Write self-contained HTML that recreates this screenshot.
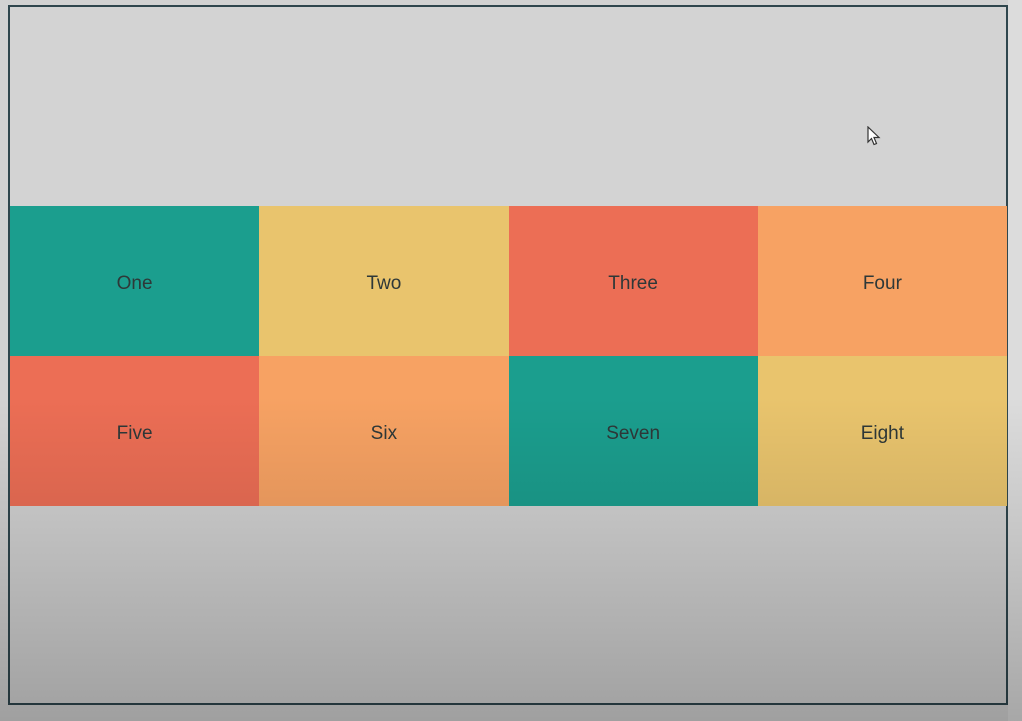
<!DOCTYPE html>
<html><head><meta charset="utf-8"><style>
html,body{margin:0;padding:0;}
body{width:1022px;height:721px;background:#d2d2d2;position:relative;overflow:hidden;font-family:"Liberation Sans",sans-serif;}
.side{position:absolute;left:1008px;top:0;width:14px;height:721px;background:#dcdcdc;}
.frame{position:absolute;left:8px;top:5px;width:1000px;height:700px;border:2px solid #2f464d;box-sizing:border-box;background:#d3d3d3;}
.grid{position:absolute;left:10px;top:206px;width:997px;height:300px;display:grid;grid-template-columns:repeat(4,1fr);grid-template-rows:150px 150px;}
.grid div{display:flex;align-items:center;justify-content:center;font-size:19px;color:#2e3838;padding-top:5px;box-sizing:border-box;}
.t{background:#1b9e8e}.y{background:#e9c46d}.r{background:#ec6e55}.o{background:#f7a263}
.ov{position:absolute;left:0;top:0;width:100%;height:100%;background:linear-gradient(to bottom,rgba(0,0,0,0) 0%,rgba(0,0,0,0) 55%,rgba(0,0,0,0.1) 75%,rgba(0,0,0,0.24) 100%);pointer-events:none;}
.cur{position:absolute;left:867px;top:126px;}
</style></head><body>
<div class="side"></div>
<div class="frame"></div>
<div class="grid">
<div class="t">One</div><div class="y">Two</div><div class="r">Three</div><div class="o">Four</div>
<div class="r">Five</div><div class="o">Six</div><div class="t">Seven</div><div class="y">Eight</div>
</div>
<svg class="cur" width="16" height="22" viewBox="0 0 16 22"><path d="M1 1 L1 16 L4.5 12.5 L7 18.5 L9.5 17.5 L7 11.5 L12 11.5 Z" fill="#fff" stroke="#333" stroke-width="1.2"/></svg>
<div class="ov"></div>
</body></html>
